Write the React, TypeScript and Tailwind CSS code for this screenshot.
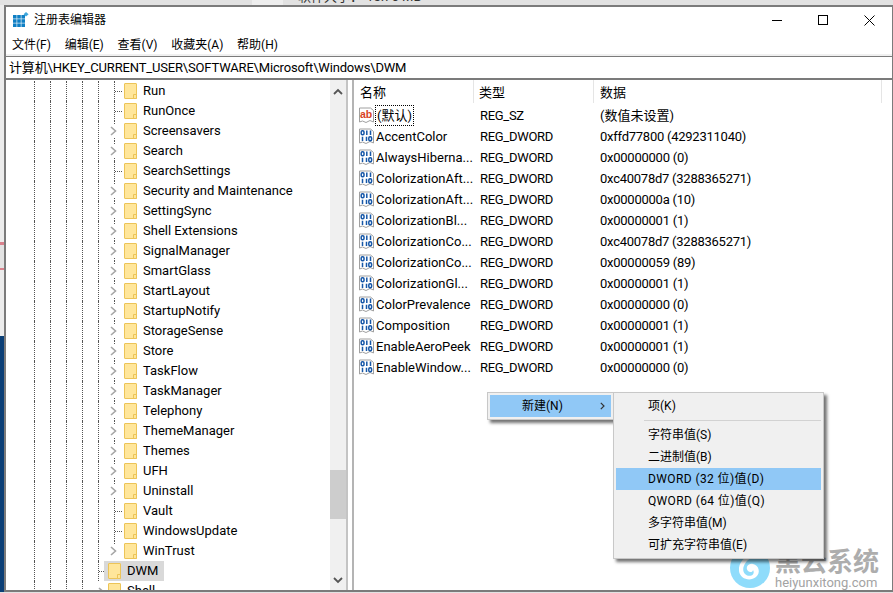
const font = "[font-family:'Roboto','Noto_Sans_CJK_SC',sans-serif]"

const treeItems = [
  { name: "Run", leaf: true },
  { name: "RunOnce", leaf: true },
  { name: "Screensavers" },
  { name: "Search" },
  { name: "SearchSettings", leaf: true },
  { name: "Security and Maintenance" },
  { name: "SettingSync" },
  { name: "Shell Extensions" },
  { name: "SignalManager" },
  { name: "SmartGlass" },
  { name: "StartLayout" },
  { name: "StartupNotify" },
  { name: "StorageSense" },
  { name: "Store" },
  { name: "TaskFlow" },
  { name: "TaskManager" },
  { name: "Telephony" },
  { name: "ThemeManager" },
  { name: "Themes" },
  { name: "UFH" },
  { name: "Uninstall" },
  { name: "Vault", leaf: true },
  { name: "WindowsUpdate", leaf: true },
  { name: "WinTrust", last: true },
]

const values = [
  ["AccentColor", "REG_DWORD", "0xffd77800 (4292311040)"],
  ["AlwaysHiberna...", "REG_DWORD", "0x00000000 (0)"],
  ["ColorizationAft...", "REG_DWORD", "0xc40078d7 (3288365271)"],
  ["ColorizationAft...", "REG_DWORD", "0x0000000a (10)"],
  ["ColorizationBl...", "REG_DWORD", "0x00000001 (1)"],
  ["ColorizationCo...", "REG_DWORD", "0xc40078d7 (3288365271)"],
  ["ColorizationCo...", "REG_DWORD", "0x00000059 (89)"],
  ["ColorizationGl...", "REG_DWORD", "0x00000001 (1)"],
  ["ColorPrevalence", "REG_DWORD", "0x00000000 (0)"],
  ["Composition", "REG_DWORD", "0x00000001 (1)"],
  ["EnableAeroPeek", "REG_DWORD", "0x00000001 (1)"],
  ["EnableWindow...", "REG_DWORD", "0x00000000 (0)"],
]

function Guides({ count }: { count: number }) {
  return (
    <>
      {Array.from({ length: count }).map((_, i) => (
        <div key={i} className="h-full w-4 shrink-0 border-l border-dotted border-[#555]" />
      ))}
    </>
  )
}

function Folder() {
  return (
    <svg width="13" height="16" viewBox="0 0 13 16" className="shrink-0">
      <rect x="0.5" y="0.5" width="12" height="15" rx="0.5" fill="#ffe69b" stroke="#ecc458" />
      <path d="M9.5 15.5V11.5H12.5V15.5Z" fill="#ffe69b" stroke="#ecc458" />
    </svg>
  )
}

function Chevron({ color = "#a6a6a6" }: { color?: string }) {
  return (
    <svg width="7" height="10" viewBox="0 0 7 10" className="shrink-0">
      <path d="M1 1L5.5 5L1 9" fill="none" stroke={color} strokeWidth="1.6" />
    </svg>
  )
}

function TreeRow({ name, leaf, last }: { name: string; leaf?: boolean; last?: boolean }) {
  return (
    <div className="flex h-5 shrink-0 items-center">
      <div className="h-full w-[28px] shrink-0" />
      <Guides count={5} />
      <div className="relative flex h-full w-[10px] shrink-0 items-center">
        {leaf && (
          <>
            <div className="h-full border-l border-dotted border-[#555]" />
            <div className="w-[7px] border-t border-dotted border-[#555]" />
          </>
        )}
        {!leaf && (
          <div className="absolute -left-[4px] top-[5px]">
            <Chevron />
          </div>
        )}
        {!leaf && !last && (
          <>
            <div className="absolute left-0 top-0 h-[3px] border-l border-dotted border-[#555]" />
            <div className="absolute bottom-0 left-0 h-[3px] border-l border-dotted border-[#555]" />
          </>
        )}
        {last && <div className="absolute left-0 top-0 h-[3px] border-l border-dotted border-[#555]" />}
      </div>
      <Folder />
      <span className="ml-[6px] whitespace-nowrap">{name}</span>
    </div>
  )
}

function StringIcon() {
  return (
    <svg width="15" height="17" viewBox="0 0 15 17" className="shrink-0">
      <path d="M0.5 1H11.5L14.5 3.5V15L11 13.5L7 15.5L3.5 14L0.5 15Z" fill="#fff" stroke="#a0a0a0" />
      <text x="1" y="10.5" fontSize="10.5" fontWeight="700" fill="#d8431f" fontFamily="'Liberation Sans', sans-serif">ab</text>
    </svg>
  )
}

function BinaryIcon() {
  return (
    <svg width="15" height="17" viewBox="0 0 15 17" className="shrink-0">
      <path d="M0.5 1H11.5L14.5 3.5V15L11 13.5L7 15.5L3.5 14L0.5 15Z" fill="#fff" stroke="#a0a0a0" />
      <g fill="none" stroke="#1657a8" strokeWidth="1.5">
        <rect x="2.2" y="2.8" width="2.8" height="4" rx="1.2" />
        <path d="M7.8 2.5V7M11.5 2.5V7" />
        <path d="M3.5 8.8V13M7.5 8.8V13" />
        <rect x="9.8" y="8.8" width="2.8" height="4" rx="1.2" />
      </g>
    </svg>
  )
}

function AppIcon() {
  return (
    <svg width="16" height="16" viewBox="0 0 16 16" className="shrink-0">
      <g fill="#0f7fc4">
        <rect x="0" y="3" width="3.6" height="3.6" />
        <rect x="4.2" y="3" width="3.6" height="3.6" />
        <rect x="8.4" y="3" width="3.6" height="3.6" />
        <rect x="0" y="7.2" width="3.6" height="3.6" />
        <rect x="4.2" y="7.2" width="3.6" height="3.6" />
        <rect x="8.4" y="7.2" width="3.6" height="3.6" />
        <rect x="0" y="11.4" width="3.6" height="3.6" />
        <rect x="4.2" y="11.4" width="3.6" height="3.6" />
        <rect x="8.4" y="11.4" width="3.6" height="3.6" />
      </g>
      <path d="M13 0L15.6 2.2L13 4.6L10.6 2.2Z" fill="#3fa7dc" />
    </svg>
  )
}

function Swirl() {
  return (
    <svg width="40" height="40" viewBox="0 0 40 40">
      <circle cx="20" cy="20" r="20" fill="#8fdcfb" />
      <path
        d="M27 8C18 5 8 13 9 23C10 31 20 34 26 29C31 25 29 17 23 16C18 15 15 20 18 23C20 25 23 24 23 22C26 27 19 30 15 26C10 20 17 9 27 8Z"
        fill="#fff"
      />
    </svg>
  )
}

export default function App() {
  return (
    <div className={`relative flex h-[593px] w-[893px] flex-col overflow-hidden bg-[#e2e2e2] text-[13px] text-black ${font}`}>
      {/* desktop peeking out above the window */}
      <div className="relative h-[5px] shrink-0 overflow-hidden">
        <div className="absolute -top-[2px] left-[252px] h-[7px] w-[31px] bg-[#eeeeee]" />
        <span className="absolute -top-[13px] left-[298px] whitespace-nowrap text-[13px] text-[#333]">软件大小： 15.76 MB</span>
      </div>
      <div className="flex min-h-0 flex-1">
        <div className="flex w-[4px] shrink-0 flex-col">
          <div className="h-[237px] bg-[#ececec]" />
          <div className="h-[3px] bg-[#d9818c]" />
          <div className="h-[23px] bg-[#e3e3e3]" />
          <div className="h-[2px] bg-[#d9818c]" />
          <div className="h-[66px] bg-[#ececec]" />
          <div className="flex-1 bg-[#0b3f76]" />
        </div>
        <div className="flex min-w-0 flex-1 flex-col border-2 border-r border-[#7b7b7b] bg-white">
          {/* title bar */}
          <div className="flex h-[26px] shrink-0 items-center pl-[7px] text-[12px]">
            <AppIcon />
            <span className="ml-[5px]">注册表编辑器</span>
            <div className="ml-auto flex h-full">
              <div className="flex w-[46px] items-center justify-center">
                <svg width="10" height="10" viewBox="0 0 10 10"><path d="M0 5.5H10" stroke="#000" /></svg>
              </div>
              <div className="flex w-[46px] items-center justify-center">
                <svg width="10" height="10" viewBox="0 0 10 10"><rect x="0.5" y="0.5" width="9" height="9" fill="none" stroke="#000" /></svg>
              </div>
              <div className="flex w-[46px] items-center justify-center">
                <svg width="11" height="11" viewBox="0 0 11 11"><path d="M0.5 0.5L10.5 10.5M10.5 0.5L0.5 10.5" stroke="#000" /></svg>
              </div>
            </div>
          </div>
          {/* menu bar */}
          <div className="flex h-[21px] shrink-0 items-center gap-[13.75px] pl-[6px] pt-[3px] text-[12px]">
            <span>文件(F)</span>
            <span>编辑(E)</span>
            <span>查看(V)</span>
            <span>收藏夹(A)</span>
            <span>帮助(H)</span>
          </div>
          <div className="h-[2px] shrink-0 bg-[#f0f0f0]" />
          {/* address bar */}
          <div className="flex h-[24px] shrink-0 items-center border-t border-b-2 border-[#7b7b7b] pl-[3px]">
            <span className="whitespace-nowrap tracking-[-0.17px]">计算机\HKEY_CURRENT_USER\SOFTWARE\Microsoft\Windows\DWM</span>
          </div>
          {/* panes */}
          <div className="flex min-h-0 flex-1">
            <div className="flex w-[342px] shrink-0 border-r-2 border-[#c4c4c4]">
              <div className="min-w-0 flex-1 overflow-hidden pt-px">
                {treeItems.map((t) => (
                  <TreeRow key={t.name} name={t.name} leaf={t.leaf} last={t.last} />
                ))}
                <div className="flex h-5 items-center">
                  <div className="h-full w-[28px] shrink-0" />
                  <Guides count={4} />
                  <div className="flex h-full w-[6px] shrink-0 items-center">
                    <div className="h-full border-l border-dotted border-[#555]" />
                    <div className="w-[5px] border-t border-dotted border-[#555]" />
                  </div>
                  <div className="flex h-full w-[60px] items-center bg-[#d9d9d9] pl-1">
                    <Folder />
                    <span className="ml-[6px]">DWM</span>
                  </div>
                </div>
                <div className="flex h-5 items-center">
                  <div className="h-full w-[28px] shrink-0" />
                  <Guides count={4} />
                  <div className="h-full w-[10px] shrink-0 pt-[6px]">
                    <Chevron />
                  </div>
                  <Folder />
                  <span className="ml-[6px]">Shell</span>
                </div>
              </div>
              {/* tree scrollbar */}
              <div className="flex w-[16px] shrink-0 flex-col items-center bg-[#f0f0f0]">
                <div className="flex h-[22px] shrink-0 items-center justify-center">
                  <svg width="10" height="7" viewBox="0 0 10 7"><path d="M1 6L5 2L9 6" fill="none" stroke="#555" strokeWidth="1.8" /></svg>
                </div>
                <div className="h-[368px] shrink-0" />
                <div className="h-[49px] w-full shrink-0 bg-[#cdcdcd]" />
                <div className="flex-1" />
                <div className="flex h-[19px] shrink-0 items-center justify-center">
                  <svg width="10" height="7" viewBox="0 0 10 7"><path d="M1 1L5 5L9 1" fill="none" stroke="#555" strokeWidth="1.8" /></svg>
                </div>
              </div>
            </div>
            <div className="w-[4px] shrink-0 bg-white" />
            <div className="min-w-0 flex-1 border-l-2 border-[#b4b4b4]">
              <div className="flex h-[25px]">
                <div className="flex h-[23px] w-[120px] items-center border-r border-[#e5e5e5] pl-[6px] pt-[2px]">名称</div>
                <div className="flex h-[23px] w-[120px] items-center border-r border-[#e5e5e5] pl-[5px] pt-[2px]">类型</div>
                <div className="flex h-[23px] w-[288px] items-center border-r border-[#e5e5e5] pl-[6px] pt-[2px]">数据</div>
              </div>
              <div className="flex h-[21px] items-center pl-[5px]">
                <div className="flex h-full w-[115px] shrink-0 items-center">
                  <StringIcon />
                  <span className="ml-px border border-dotted border-black px-px leading-[19px]">(默认)</span>
                </div>
                <span className="ml-[6px] w-[120px] shrink-0 tracking-[-0.3px]">REG_SZ</span>
                <span>(数值未设置)</span>
              </div>
              {values.map(([name, type, data], i) => (
                <div key={i} className="flex h-[21px] items-center pl-[5px]">
                  <div className="flex h-full w-[115px] shrink-0 items-center">
                    <BinaryIcon />
                    <span className="ml-[2px] whitespace-nowrap">{name}</span>
                  </div>
                  <span className="ml-[6px] w-[120px] shrink-0 tracking-[-0.3px]">{type}</span>
                  <span className="tracking-[-0.25px]">{data}</span>
                </div>
              ))}
            </div>
          </div>
        </div>
      </div>
      <div className="h-[1px] shrink-0" />

      {/* watermark */}
      <div className="absolute left-[730px] top-[548px] flex">
        <Swirl />
        <div className="ml-[5px] flex flex-col pt-px">
          <span className="text-[26px] font-bold leading-[26px] text-[#adadad]">黑云系统</span>
          <span className="mt-px text-[13px] leading-[13px] text-[#a3a3a3]">heiyunxitong.com</span>
        </div>
      </div>

      {/* context menu */}
      <div className="absolute left-[487px] top-[392px] h-[28px] w-[127px] border border-[#c8c8c8] bg-[#f0f0f0] p-[2px] shadow-[3px_3px_3px_rgba(0,0,0,0.55)]">
        <div className="flex h-[22px] items-center justify-between bg-[#90c8f6] pl-[32px] pr-[6px] text-[12px]">
          <span>新建(N)</span>
          <svg width="5" height="8" viewBox="0 0 5 8"><path d="M0.8 0.8L4 4L0.8 7.2" fill="none" stroke="#333" strokeWidth="1.2" /></svg>
        </div>
      </div>
      <div className="absolute left-[613px] top-[392px] w-[211px] border border-[#c8c8c8] bg-[#f0f0f0] p-[2px] text-[12px] shadow-[3px_3px_3px_rgba(0,0,0,0.55)]">
        <div className="flex h-[22px] items-center pl-[32px]">项(K)</div>
        <div className="flex h-[7px] items-center pl-[28px]">
          <div className="h-px flex-1 bg-[#d2d2d2]" />
        </div>
        <div className="flex h-[22px] items-center pl-[32px]">字符串值(S)</div>
        <div className="flex h-[22px] items-center pl-[32px]">二进制值(B)</div>
        <div className="flex h-[22px] items-center bg-[#90c8f6] pl-[32px] tracking-[0.4px]">DWORD (32 位)值(D)</div>
        <div className="flex h-[22px] items-center pl-[32px] tracking-[0.4px]">QWORD (64 位)值(Q)</div>
        <div className="flex h-[22px] items-center pl-[32px]">多字符串值(M)</div>
        <div className="flex h-[22px] items-center pl-[32px]">可扩充字符串值(E)</div>
      </div>
    </div>
  )
}
